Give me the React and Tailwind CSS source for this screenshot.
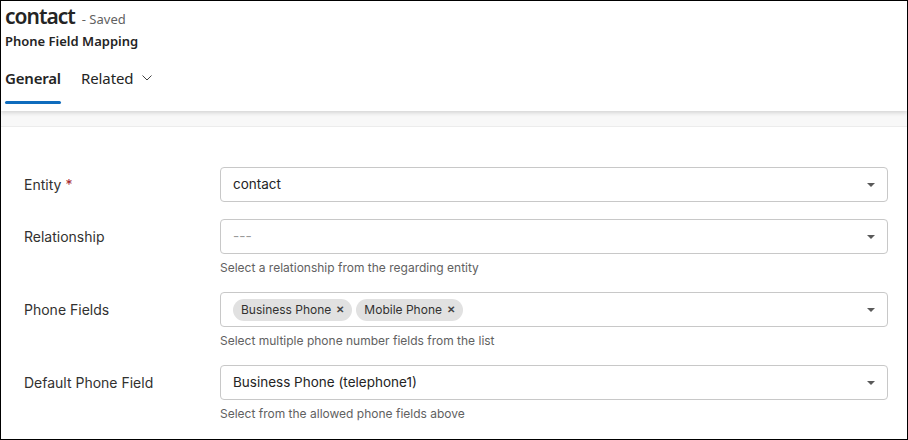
import React from "react";

const Caret = () => (
  <svg width="8" height="4" viewBox="0 0 8 4" className="shrink-0">
    <path d="M0 0h8L4 4z" fill="#5a5a5a" />
  </svg>
);

const rows = [
  { label: "Entity", required: true, value: "contact" },
  { label: "Relationship", value: "---", placeholder: true, help: "Select a relationship from the regarding entity" },
  { label: "Phone Fields", chips: ["Business Phone", "Mobile Phone"], help: "Select multiple phone number fields from the list" },
  { label: "Default Phone Field", value: "Business Phone (telephone1)", help: "Select from the allowed phone fields above" },
];

const App = () => {
  return (
    <div className="w-[908px] h-[440px] bg-white border border-black flex flex-col overflow-hidden">
      <div className="h-[110px] shrink-0 px-1 pt-[2px] shadow-[0_2px_4px_rgba(0,0,0,0.14)] relative z-10 bg-white font-['Noto_Sans',sans-serif]">
        <div className="flex items-baseline gap-[7px]">
          <h1 className="text-[21px] leading-[26px] font-semibold text-[#242424] tracking-[-1px]">contact</h1>
          <span className="text-[13px] text-[#616161]">- Saved</span>
        </div>
        <p className="text-[13px] leading-[18px] mt-[2px] font-semibold text-[#242424]">Phone Field Mapping</p>
        <div className="flex gap-[20px] mt-[18px]">
          <div className="flex flex-col items-center">
            <span className="text-[15px] leading-[20px] font-semibold text-[#242424] tracking-[-0.2px]">General</span>
            <span className="mt-[13px] h-[3px] w-[56px] rounded-full bg-[#0f6cbd]" />
          </div>
          <div className="flex items-start gap-[8px] text-[15px] leading-[20px] text-[#242424]">
            <span className="tracking-[-0.1px]">Related</span>
            <svg width="12" height="12" viewBox="0 0 12 12" className="mt-[4px]">
              <path d="M1.5 3.5 6 8l4.5-4.5" fill="none" stroke="#424242" strokeWidth="1" />
            </svg>
          </div>
        </div>
      </div>
      <div className="h-[16px] shrink-0 bg-[#f8f8f8] border-b border-[#ececec]" />
      <div className="flex-1 pl-[23px] pr-[19px] pt-[40px] font-['Inter',sans-serif] flex flex-col gap-[17px]">
        {rows.map((r, i) => (
          <div key={i} className="flex">
            <div className="w-[196px] shrink-0 h-[35px] flex items-center text-[14px] text-[#323130]">
              {r.label}
              {r.required && <span className="text-[#a4262c] ml-1">*</span>}
            </div>
            <div className="flex-1 flex flex-col">
              <div className="h-[35px] border border-[#c8c8c8] rounded-[4px] flex items-center pl-3 pr-[12px]">
                <div className="flex-1 flex items-center gap-[4px]">
                  {r.chips ? (
                    r.chips.map((c) => (
                      <span key={c} className="h-[22px] bg-[#e1e1e1] rounded-full px-[8px] flex items-center gap-[5px] text-[12px] text-[#323130]">
                        {c}
                        <span className="text-[10px] font-bold text-[#444]">✕</span>
                      </span>
                    ))
                  ) : (
                    <span className={`text-[13.5px] ${r.placeholder ? "text-[#9a9a9a]" : "text-[#242424]"}`}>{r.value}</span>
                  )}
                </div>
                <Caret />
              </div>
              {r.help && <p className="text-[12px] leading-[15px] text-[#616161] mt-[6px]">{r.help}</p>}
            </div>
          </div>
        ))}
      </div>
    </div>
  );
};

export default App;
